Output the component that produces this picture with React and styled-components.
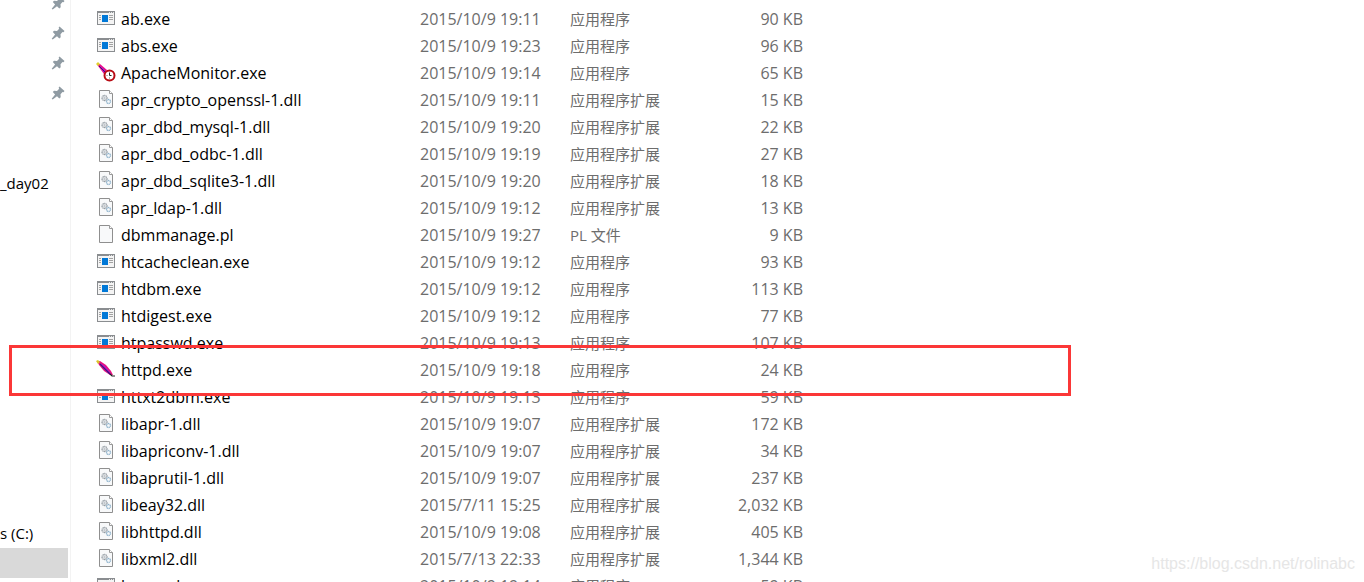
import React from 'react'
import styled, { createGlobalStyle } from 'styled-components';

const files = [
  { name: 'ab.exe', date: '2015/10/9 19:11', kind: 'app', size: '90 KB' },
  { name: 'abs.exe', date: '2015/10/9 19:23', kind: 'app', size: '96 KB' },
  { name: 'ApacheMonitor.exe', date: '2015/10/9 19:14', kind: 'app', icon: 'monitor', size: '65 KB' },
  { name: 'apr_crypto_openssl-1.dll', date: '2015/10/9 19:11', kind: 'dll', size: '15 KB' },
  { name: 'apr_dbd_mysql-1.dll', date: '2015/10/9 19:20', kind: 'dll', size: '22 KB' },
  { name: 'apr_dbd_odbc-1.dll', date: '2015/10/9 19:19', kind: 'dll', size: '27 KB' },
  { name: 'apr_dbd_sqlite3-1.dll', date: '2015/10/9 19:20', kind: 'dll', size: '18 KB' },
  { name: 'apr_ldap-1.dll', date: '2015/10/9 19:12', kind: 'dll', size: '13 KB' },
  { name: 'dbmmanage.pl', date: '2015/10/9 19:27', kind: 'pl', size: '9 KB' },
  { name: 'htcacheclean.exe', date: '2015/10/9 19:12', kind: 'app', size: '93 KB' },
  { name: 'htdbm.exe', date: '2015/10/9 19:12', kind: 'app', size: '113 KB' },
  { name: 'htdigest.exe', date: '2015/10/9 19:12', kind: 'app', size: '77 KB' },
  { name: 'htpasswd.exe', date: '2015/10/9 19:13', kind: 'app', size: '107 KB' },
  { name: 'httpd.exe', date: '2015/10/9 19:18', kind: 'app', icon: 'feather', size: '24 KB' },
  { name: 'httxt2dbm.exe', date: '2015/10/9 19:13', kind: 'app', size: '59 KB' },
  { name: 'libapr-1.dll', date: '2015/10/9 19:07', kind: 'dll', size: '172 KB' },
  { name: 'libapriconv-1.dll', date: '2015/10/9 19:07', kind: 'dll', size: '34 KB' },
  { name: 'libaprutil-1.dll', date: '2015/10/9 19:07', kind: 'dll', size: '237 KB' },
  { name: 'libeay32.dll', date: '2015/7/11 15:25', kind: 'dll', size: '2,032 KB' },
  { name: 'libhttpd.dll', date: '2015/10/9 19:08', kind: 'dll', size: '405 KB' },
  { name: 'libxml2.dll', date: '2015/7/13 22:33', kind: 'dll', size: '1,344 KB' },
  { name: 'logresolve.exe', date: '2015/10/9 19:14', kind: 'app', size: '59 KB' },
]

const kinds = { app: '应用程序', dll: '应用程序扩展', pl: 'PL 文件' }

function AppIcon() {
  return (
    <svg width="20" height="20" viewBox="0 0 20 20" shapeRendering="crispEdges">
      <path d="M1 3h18v14H1z" fill="#8a8d90" />
      <path d="M2 5h16v11H2z" fill="#f4f4f4" />
      <path d="M13 4h1v1h-1zM15 4h1v1h-1zM17 4h1v1h-1z" fill="#e4e4e4" />
      <path d="M6 7h6v7H6z" fill="#0078d7" />
      <path d="M3 7h2v1H3zM3 9h2v1H3zM3 11h2v1H3zM13 7h4v1h-4zM13 9h4v1h-4zM13 11h4v1h-4z" fill="#a2a2a2" />
    </svg>
  )
}

function PageIcon({ gears }) {
  return (
    <svg width="20" height="20" viewBox="0 0 20 20">
      <path d="M3.500 1.500h10l3 3v14h-13z" fill="#f8f9fa" stroke="#8f8f8f" />
      <path d="M13.500 1.500v3h3" fill="#fff" stroke="#9a9a9a" />
      {gears && (
        <g fill="none">
          <circle cx="8.500" cy="9" r="2.500" stroke="#949ca3" strokeWidth="1.3" strokeDasharray="1.2 .4" />
          <circle cx="8.500" cy="9" r=".8" stroke="#a2abb2" strokeWidth=".8" />
          <circle cx="12.500" cy="12.500" r="2" stroke="#8fb3cc" strokeWidth="1.3" strokeDasharray="1.2 .4" />
        </g>
      )}
    </svg>
  )
}

function FeatherIcon() {
  return (
    <svg width="20" height="20" viewBox="0 0 20 20">
      <path d="M1 2l3 0 6 4 5 6 2 4-3 0-6-4-5-6z" fill="#e8127d" />
      <path d="M4 4l5 3 5 6 1 3-3-2-5-5z" fill="#c40fc4" />
      <path d="M0 2l2-1 2 2-2 2z" fill="#d9c52c" />
      <path d="M4 5l10 10" stroke="#3a1680" strokeWidth="1.2" />
      <path d="M14 15l2 2 3 0" fill="none" stroke="#222" strokeWidth="1.2" />
    </svg>
  )
}

function MonitorIcon() {
  return (
    <svg width="20" height="20" viewBox="0 0 20 20">
      <path d="M1 2l3 0 7 6-3 4-6-8z" fill="#ec108b" />
      <path d="M4 4l5 4-1 3z" fill="#b118c9" />
      <path d="M3 4l6 6" stroke="#3a1680" />
      <path d="M0 2l2-2 2 2-2 2z" fill="#e0cf2f" />
      <circle cx="13.500" cy="13.500" r="5" fill="#fff" stroke="#b80c14" strokeWidth="2" />
      <path d="M13.500 10.500v3h2" fill="none" stroke="#222" />
      <path d="M10.500 13.500h1M13.500 15.500v1" fill="none" stroke="#777" />
    </svg>
  )
}

function PinIcon() {
  return (
    <svg width="14" height="14" viewBox="0 0 14 14">
      <path d="M8.500.5l5 4.500-1 1.200-1-.2-2 2.200.2 3-1.400 1.200L6 10.200 1.700 13.600.7 12.800 4.100 8.400 1.800 6l1.200-1.200 3 .2L8.200 2.800 7.600 1.700z" fill="#8f9ba3" />
    </svg>
  )
}

function FileIcon({ type }) {
  if (type === 'monitor') return <MonitorIcon />
  if (type === 'feather') return <FeatherIcon />
  if (type === 'app') return <AppIcon />
  return <PageIcon gears={type === 'dll'} />
}

function App() {
  return (
    <Page>
      <GlobalStyle />
      <Sidebar>
        <QuickAccess>
          <NavItem><PinIcon /></NavItem>
          <NavItem><PinIcon /></NavItem>
          <NavItem><PinIcon /></NavItem>
          <NavItem><PinIcon /></NavItem>
          <NavItem />
          <NavItem />
          <NavItem $label>_day02</NavItem>
        </QuickAccess>
        <Drives>
          <NavItem $label>s (C:)</NavItem>
          <NavItem $selected />
        </Drives>
      </Sidebar>

      <Content>
        <FileTable>
          <tbody>
            {files.map((file) => (
              <tr key={file.name}>
                <NameCell>
                  <FileName>
                    <FileIcon type={file.icon || file.kind} />
                    {file.name}
                  </FileName>
                </NameCell>
                <DateCell>{file.date}</DateCell>
                <KindCell>{kinds[file.kind]}</KindCell>
                <SizeCell>{file.size}</SizeCell>
              </tr>
            ))}
          </tbody>
        </FileTable>
      </Content>

      <Marker />
      <Watermark>https://blog.csdn.net/rolinabc</Watermark>
    </Page>
  )
}

export default App

const GlobalStyle = createGlobalStyle`
body{
    margin: 0;
    background: #fff;
    overflow: hidden;
}
`
const Page = styled.div`
position: relative;
display: flex;
height: 100vh;
overflow: hidden;
color: #000;
font-family: 'Open Sans', 'Noto Sans CJK SC', sans-serif;
font-size: 16px;
`
const Sidebar = styled.nav`
display: flex;
flex-direction: column;
flex: 0 0 70px;
border-right: 1px solid #f3f3f3;
`
/* the list is scrolled by part of a row */
const QuickAccess = styled.ul`
margin: -12px 0 0;
padding: 0;
list-style: none;
`
const Drives = styled.ul`
margin: 320px 0 0;
padding: 0;
list-style: none;
`
const NavItem = styled.li`
display: flex;
align-items: center;
justify-content: ${(props) => (props.$label ? 'flex-start' : 'flex-end')};
height: 30px;
margin-right: 2px;
padding-right: 3px;
box-sizing: border-box;
font-size: 15px;
white-space: nowrap;
background: ${(props) => (props.$selected ? '#d9d9d9' : 'transparent')};
`
const Content = styled.main`
flex: 1;
min-width: 0;
padding: 6px 0 0 25px;
`
const FileTable = styled.table`
border-collapse: collapse;
table-layout: fixed;
width: 707px;

            td{
                height: 27px;
                padding: 0;
                line-height: 27px;
                white-space: nowrap;
            }
`
const NameCell = styled.td`
width: 324px;
`
const FileName = styled.div`
display: flex;
align-items: center;
gap: 5px;

            svg{
                margin-bottom: 3px;
            }
`
const DateCell = styled.td`
width: 150px;
color: #6d6d6d;
`
const KindCell = styled.td`
color: #6d6d6d;
font-size: 15px;
`
const SizeCell = styled.td`
width: 100px;
color: #6d6d6d;
text-align: right;
`
const Marker = styled.div`
position: absolute;
top: 345px;
left: 9px;
width: 1062px;
height: 51px;
box-sizing: border-box;
border: 3px solid #fb3737;
`
const Watermark = styled.div`
position: absolute;
right: 9px;
bottom: 9px;
color: #e6e6e6;
font-family: 'Liberation Sans', sans-serif;
font-size: 16px;
line-height: 18px;
`
